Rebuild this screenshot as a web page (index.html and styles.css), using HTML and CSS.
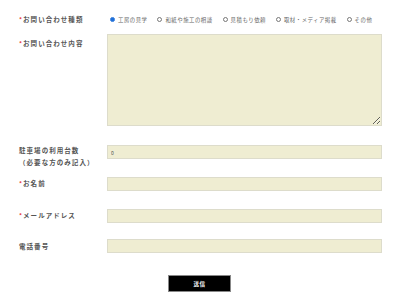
FILE: index.html
```html
<!DOCTYPE html>
<html lang="ja">
<head>
  <meta charset="UTF-8" />
  <meta name="viewport" content="width=device-width, initial-scale=1.0" />
  <title>お問い合わせ</title>
  <link rel="stylesheet" href="styles.css">
</head>
<body>
  <form class="contact-form">
    <div class="form-row row-type">
      <div class="form-label"><span class="required">*</span>お問い合わせ種類</div>
      <div class="radio-group">
        <label class="radio-item"><input type="radio" name="type" checked>工房の見学</label>
        <label class="radio-item"><input type="radio" name="type">和紙や施工の相談</label>
        <label class="radio-item"><input type="radio" name="type">見積もり依頼</label>
        <label class="radio-item"><input type="radio" name="type">取材・メディア掲載</label>
        <label class="radio-item"><input type="radio" name="type">その他</label>
      </div>
    </div>

    <div class="form-row row-message">
      <div class="form-label label-top"><span class="required">*</span>お問い合わせ内容</div>
      <textarea class="field field-area"></textarea>
    </div>

    <div class="form-row row-parking">
      <div class="form-label label-multi">駐車場の利用台数<br>（必要な方のみ記入）</div>
      <input class="field field-parking" type="text" value="0">
    </div>

    <div class="form-row row-name">
      <div class="form-label"><span class="required">*</span>お名前</div>
      <input class="field" type="text">
    </div>

    <div class="form-row row-mail">
      <div class="form-label"><span class="required">*</span>メールアドレス</div>
      <input class="field" type="text">
    </div>

    <div class="form-row row-tel">
      <div class="form-label">電話番号</div>
      <input class="field" type="text">
    </div>

    <div class="submit-row">
      <button type="button" class="submit-button">送信</button>
    </div>
  </form>
</body>
</html>
```

FILE: styles.css
```css
* {
  box-sizing: border-box;
  margin: 0;
  padding: 0;
}

body {
  font-family: "Noto Sans CJK JP", "Noto Sans", sans-serif;
  background-color: #fff;
  color: #333;
}

.contact-form {
  width: 399px;
  padding: 12px 0 0 19px;
}

.form-row {
  display: grid;
  grid-template-columns: 88px 275px;
  align-items: center;
}

.form-label {
  font-size: 6.5px;
  font-weight: bold;
  letter-spacing: 1.05px;
  line-height: 14px;
  color: #555;
  white-space: nowrap;
}

.required {
  color: #e8383d;
  font-size: 6px;
  margin-right: 1px;
  letter-spacing: 0;
}

.row-type {
  height: 10px;
  margin-bottom: 12px;
}

.radio-group {
  display: flex;
  align-items: center;
  gap: 10px;
  padding-left: 3px;
}

.radio-item {
  display: flex;
  align-items: center;
  gap: 3px;
  font-size: 5.4px;
  letter-spacing: 0.5px;
  color: #666;
  white-space: nowrap;
}

.radio-item input {
  appearance: none;
  width: 5px;
  height: 5px;
  border: 0.6px solid #777;
  border-radius: 50%;
  background: #fff;
}

.radio-item input:checked {
  border-color: #1f6fd8;
  background: radial-gradient(circle, #1f6fd8 0 1.4px, #fff 1.6px);
}

.field {
  display: block;
  width: 275px;
  height: 14px;
  background-color: #efedd2;
  border: 1px solid #dddccb;
  font-family: inherit;
  font-size: 5px;
  color: #555;
  padding: 0 3px;
  outline: none;
}

.row-message {
  align-items: start;
  margin-bottom: 17px;
}

.label-top {
  padding-top: 2px;
}

.field-area {
  height: 92px;
  resize: vertical;
}

.row-parking {
  align-items: start;
  margin-bottom: 8px;
}

.label-multi {
  padding-top: 1px;
  line-height: 12px;
}

.field-parking {
  margin-top: 2px;
}

.row-name {
  margin-bottom: 17px;
}

.row-mail {
  margin-bottom: 16px;
}

.submit-row {
  display: flex;
  justify-content: center;
  margin: 22px 0 0 -19px;
}

.submit-button {
  width: 63px;
  height: 17px;
  background-color: #000;
  color: #fff;
  border: 1px solid #888;
  font-family: inherit;
  font-size: 5.5px;
  font-weight: bold;
  letter-spacing: 0.5px;
}
```
